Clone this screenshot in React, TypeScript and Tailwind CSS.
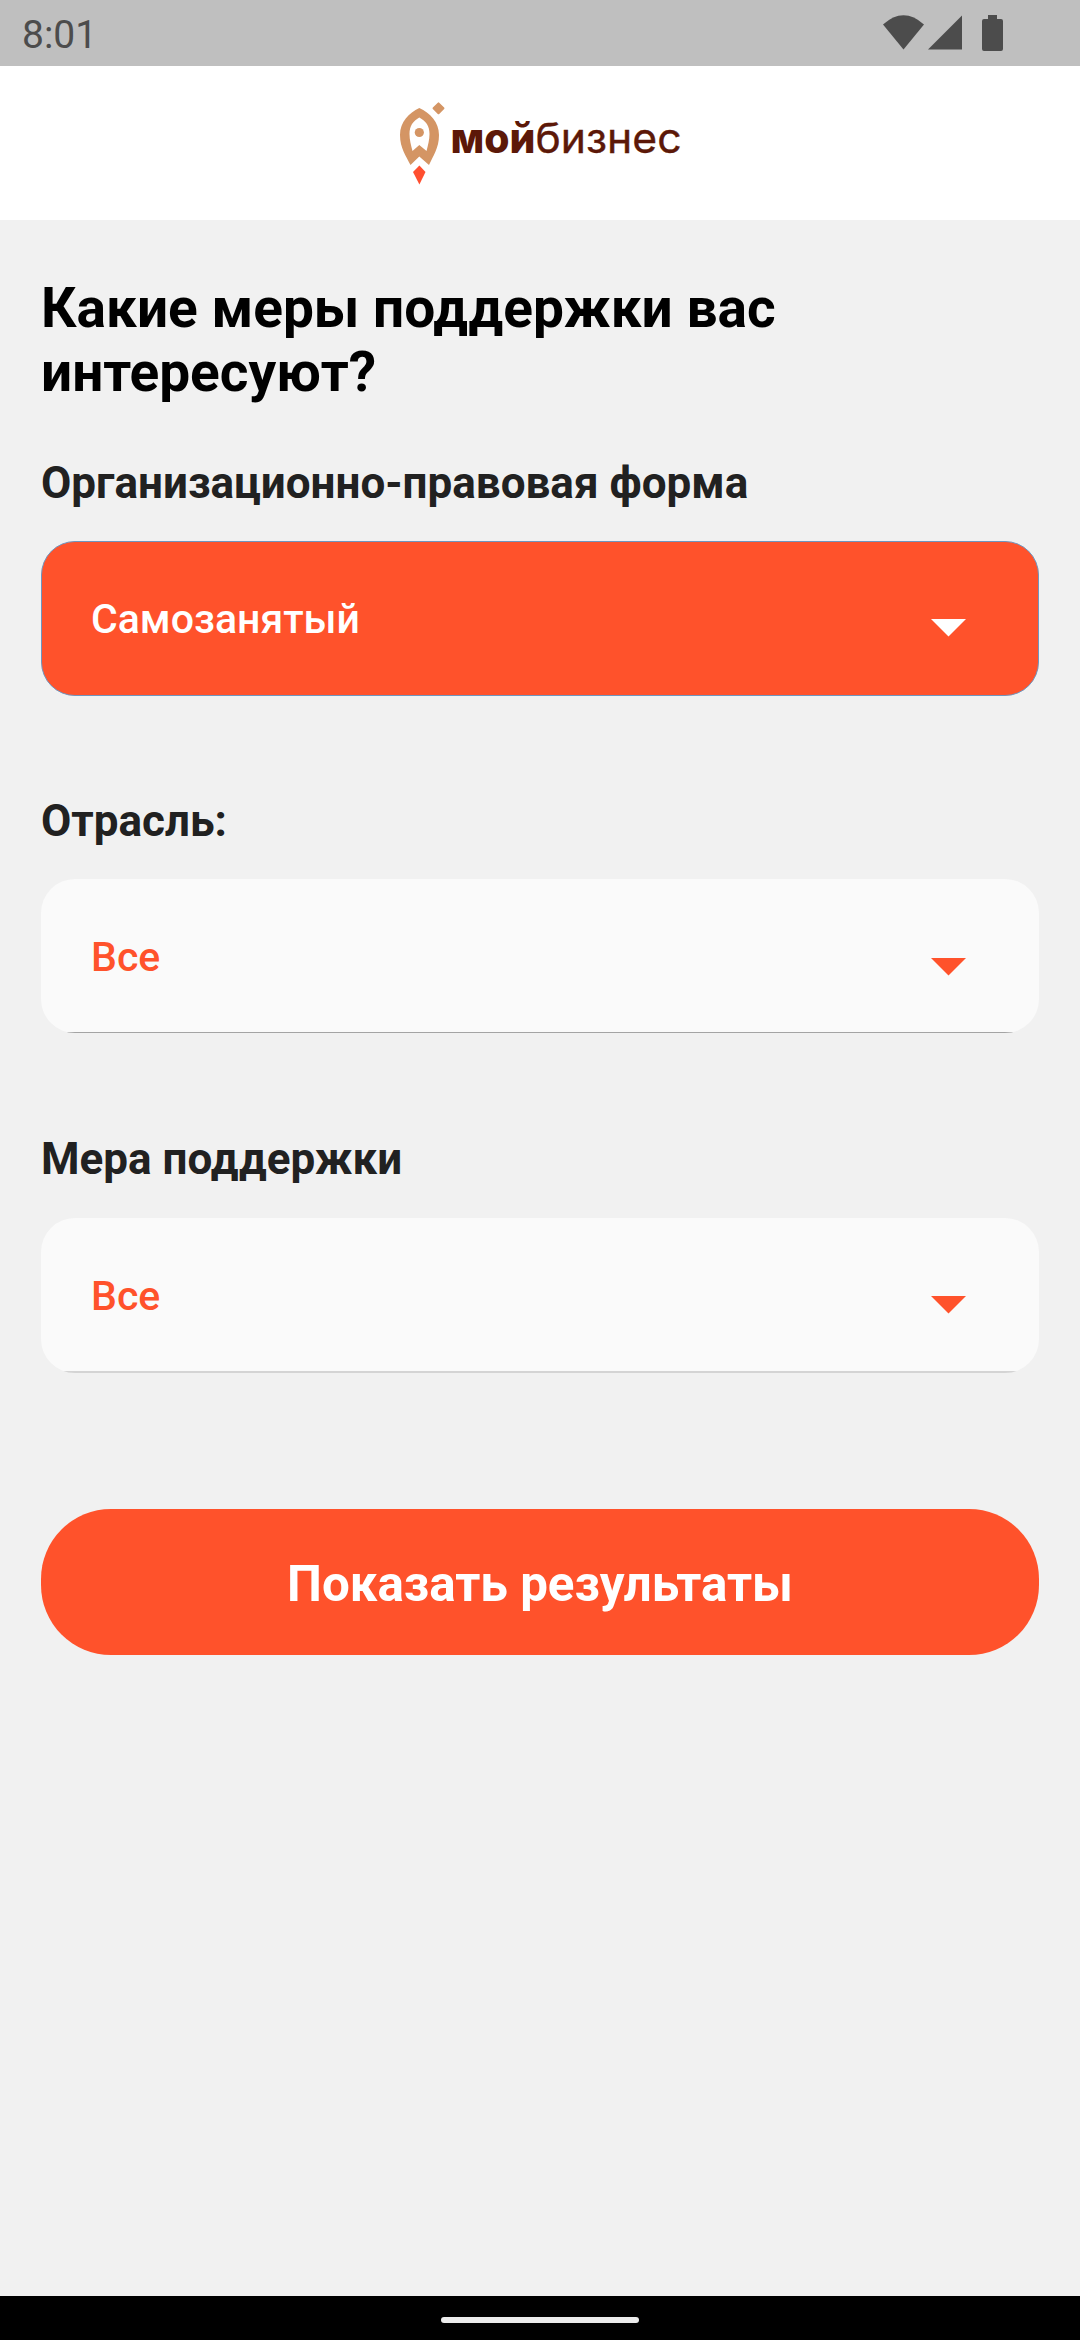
import React from "react";

function StatusBar() {
  return (
    <div className="flex h-[66px] shrink-0 items-center justify-between bg-[#bfbfbf] text-[#4c4c4c]">
      <span className="ml-[22px] mt-[3px] text-[39px] leading-[46px]">8:01</span>
      <svg className="h-[66px] w-[220px]" viewBox="0 0 220 66" fill="currentColor" aria-hidden="true">
        <path d="M23 24.5Q43.5 6 64 24.5L43.5 49.5Z" />
        <path d="M68 49.5L102 15.5V49.5Z" />
        <path d="M128 15h9v4h4q2 0 2 2v28q0 2-2 2h-17q-2 0-2-2V21q0-2 2-2h4Z" />
      </svg>
    </div>
  );
}

function Logo() {
  return (
    <svg className="h-[154px] w-[320px]" viewBox="380 66 320 154" role="img" aria-label="мойбизнес">
      <path
        fill="#d49564"
        fillRule="evenodd"
        d="M419.3 108C430 113 439 122 439 135C439 148 433 156 429 165L419.3 156.5L410.5 165C406 156 400 148 400 135C400 122 409 113 419.3 108ZM419.3 117.5C413 121 409.5 126 409.5 134C409.5 140 411 145 412.5 151L419.3 145L426.5 151C428 145 429.5 140 429.5 134C429.5 126 426 121 419.3 117.5Z"
      />
      <circle cx="419.3" cy="132.5" r="4.6" fill="#d49564" />
      <rect x="434" y="103.8" width="9" height="9" rx="1" fill="#d49564" transform="rotate(45 438.5 108.3)" />
      <path fill="#ff4f30" d="M419.4 165.5L425.5 172L419.4 184.5L413 172Z" />
      <g fill="#5c1808" fontFamily="Inter, sans-serif" fontSize="41">
        <text x="450.5" y="152.7" fontWeight="800" textLength="85" lengthAdjust="spacingAndGlyphs">мой</text>
        <text x="535.5" y="152.7" fontWeight="400" textLength="146" lengthAdjust="spacingAndGlyphs" stroke="#5c1808" strokeWidth="0.4">бизнес</text>
      </g>
    </svg>
  );
}

const boxStyles = {
  active: "mt-8 h-[155px] border border-[#6f95be] bg-[#ff522b] text-white pl-[49px] pr-[72px]",
  dark: "mt-8 h-[154px] bg-[linear-gradient(#fafafa_153px,#a4a4a4_153px)] text-[#ff522b] pl-[50px] pr-[73px] pt-[2px]",
  light: "mt-[33px] h-[155px] bg-[linear-gradient(#fafafa_153px,#d4d4d4_153px)] text-[#ff522b] pl-[50px] pr-[73px]",
};

function SelectField({ label, value, variant }: { label: string; value: string; variant: keyof typeof boxStyles }) {
  return (
    <div className="flex h-[338px] flex-col">
      <label className="text-[44px] font-bold leading-[52px] text-[#212121]">{label}</label>
      <button className={"flex w-full items-center justify-between rounded-[34px] " + boxStyles[variant]}>
        <span className="text-[41px] font-medium leading-[48px]">{value}</span>
        <svg className="mt-[19px] h-[18px] w-[35px]" viewBox="0 0 35 18" fill="currentColor" aria-hidden="true">
          <path d="M0 0H35L17.5 17.5Z" />
        </svg>
      </button>
    </div>
  );
}

export default function App() {
  return (
    <div className="flex h-[2340px] w-[1080px] flex-col bg-[#f1f1f1] font-['Roboto',sans-serif]">
      <StatusBar />
      <header className="flex h-[154px] shrink-0 justify-center bg-white">
        <Logo />
      </header>
      <main className="flex grow flex-col px-[41px] pt-14">
        <h1 className="text-[55px] font-bold leading-[64px] text-black">
          Какие меры поддержки вас
          <br />
          интересуют?
        </h1>
        <div className="mt-[53px]">
          <SelectField label="Организационно-правовая форма" value="Самозанятый" variant="active" />
          <SelectField label="Отрасль:" value="Все" variant="dark" />
          <SelectField label="Мера поддержки" value="Все" variant="light" />
        </div>
        <button className="mt-[38px] h-[146px] rounded-[70px] bg-[#ff522b] pt-[3px] text-[49.3px] font-bold leading-[58px] text-white">
          Показать результаты
        </button>
      </main>
      <footer className="flex h-11 shrink-0 items-center justify-center bg-black">
        <div className="mt-[4px] h-1.5 w-[198px] rounded-full bg-[#ececec]" />
      </footer>
    </div>
  );
}
